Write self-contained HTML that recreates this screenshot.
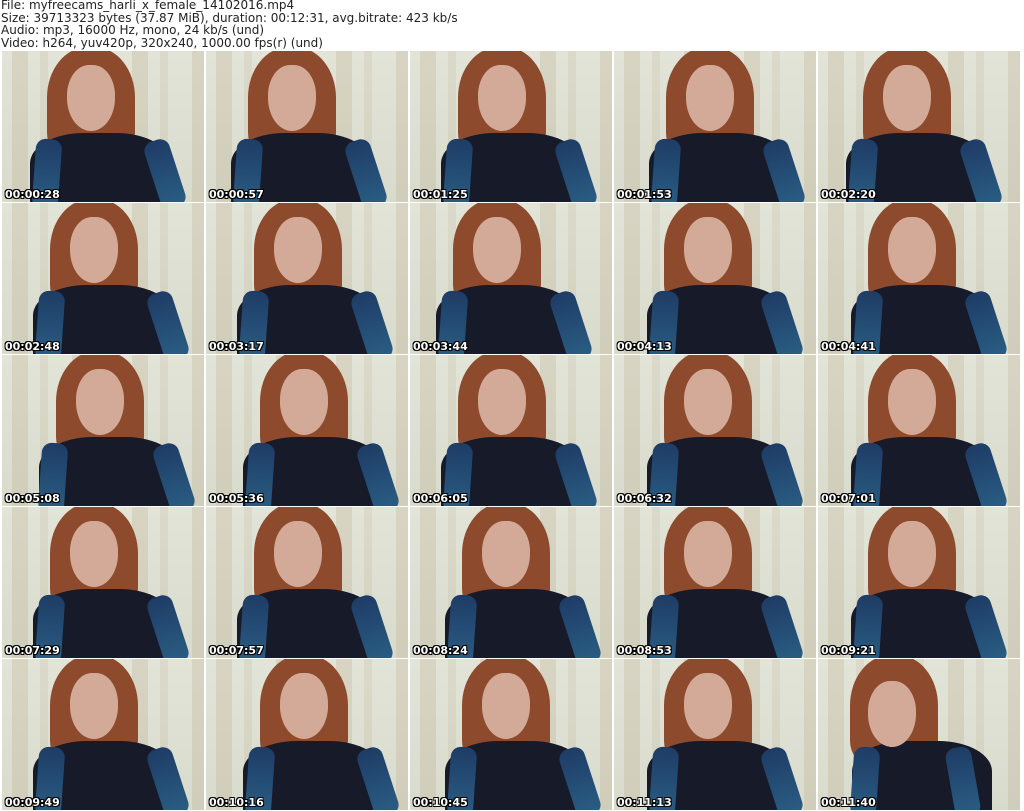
<!DOCTYPE html><html><head><style>
body{margin:0;width:1024px;height:811px;background:#fff;position:relative;overflow:hidden;font-family:"DejaVu Sans","Liberation Sans",sans-serif}
.hd{position:absolute;left:1px;top:-1px;font-size:12px;line-height:12.6px;color:#222;white-space:pre}
.c{position:absolute;width:202px;height:151px;overflow:hidden;background:#dde0d2;
background-image:repeating-linear-gradient(90deg,rgba(170,140,100,0) 0 10px,rgba(170,140,100,.18) 10px 26px,rgba(170,140,100,0) 26px 38px,rgba(170,140,100,.12) 38px 46px,rgba(170,140,100,0) 46px 60px),linear-gradient(#e2e4d8,#d8dbcc)}
.c i{position:absolute;display:block}
.h{top:-4px;width:88px;height:110px;border-radius:46% 46% 22% 22%;background:#8e4a2c}
.f{top:14px;width:48px;height:66px;border-radius:46% 46% 50% 50%;background:#d3aa98}
.b{top:82px;width:140px;height:80px;border-radius:38% 38% 0 0;background:#171a28}
.a{top:88px;width:26px;height:70px;border-radius:10px;background:linear-gradient(#1e3c66,#2a5e84)}
.t{position:absolute;left:3px;bottom:1px;color:#fff;font-weight:bold;font-size:11px;text-shadow:-1px -1px 0 #000,1px -1px 0 #000,-1px 1px 0 #000,1px 1px 0 #000}
</style></head><body>
<div class="hd">File: myfreecams_harli_x_female_14102016.mp4
Size: 39713323 bytes (37.87 MiB), duration: 00:12:31, avg.bitrate: 423 kb/s
Audio: mp3, 16000 Hz, mono, 24 kb/s (und)
Video: h264, yuv420p, 320x240, 1000.00 fps(r) (und)</div>

<div class="c" style="left:2px;top:51px"><i class="h" style="left:45px"></i><i class="b" style="left:28px"></i><i class="a" style="left:32px;transform:rotate(4deg)"></i><i class="a" style="left:150px;transform:rotate(-18deg)"></i><i class="f" style="left:65px"></i><span class="t">00:00:28</span></div>
<div class="c" style="left:206px;top:51px"><i class="h" style="left:42px"></i><i class="b" style="left:25px"></i><i class="a" style="left:29px;transform:rotate(4deg)"></i><i class="a" style="left:147px;transform:rotate(-18deg)"></i><i class="f" style="left:62px"></i><span class="t">00:00:57</span></div>
<div class="c" style="left:410px;top:51px"><i class="h" style="left:48px"></i><i class="b" style="left:31px"></i><i class="a" style="left:35px;transform:rotate(4deg)"></i><i class="a" style="left:153px;transform:rotate(-18deg)"></i><i class="f" style="left:68px"></i><span class="t">00:01:25</span></div>
<div class="c" style="left:614px;top:51px"><i class="h" style="left:52px"></i><i class="b" style="left:35px"></i><i class="a" style="left:39px;transform:rotate(4deg)"></i><i class="a" style="left:157px;transform:rotate(-18deg)"></i><i class="f" style="left:72px"></i><span class="t">00:01:53</span></div>
<div class="c" style="left:818px;top:51px"><i class="h" style="left:45px"></i><i class="b" style="left:28px"></i><i class="a" style="left:32px;transform:rotate(4deg)"></i><i class="a" style="left:150px;transform:rotate(-18deg)"></i><i class="f" style="left:65px"></i><span class="t">00:02:20</span></div>

<div class="c" style="left:2px;top:203px"><i class="h" style="left:48px"></i><i class="b" style="left:31px"></i><i class="a" style="left:35px;transform:rotate(4deg)"></i><i class="a" style="left:153px;transform:rotate(-18deg)"></i><i class="f" style="left:68px"></i><span class="t">00:02:48</span></div>
<div class="c" style="left:206px;top:203px"><i class="h" style="left:48px"></i><i class="b" style="left:31px"></i><i class="a" style="left:35px;transform:rotate(4deg)"></i><i class="a" style="left:153px;transform:rotate(-18deg)"></i><i class="f" style="left:68px"></i><span class="t">00:03:17</span></div>
<div class="c" style="left:410px;top:203px"><i class="h" style="left:43px"></i><i class="b" style="left:26px"></i><i class="a" style="left:30px;transform:rotate(4deg)"></i><i class="a" style="left:148px;transform:rotate(-18deg)"></i><i class="f" style="left:63px"></i><span class="t">00:03:44</span></div>
<div class="c" style="left:614px;top:203px"><i class="h" style="left:50px"></i><i class="b" style="left:33px"></i><i class="a" style="left:37px;transform:rotate(4deg)"></i><i class="a" style="left:155px;transform:rotate(-18deg)"></i><i class="f" style="left:70px"></i><span class="t">00:04:13</span></div>
<div class="c" style="left:818px;top:203px"><i class="h" style="left:50px"></i><i class="b" style="left:33px"></i><i class="a" style="left:37px;transform:rotate(4deg)"></i><i class="a" style="left:155px;transform:rotate(-18deg)"></i><i class="f" style="left:70px"></i><span class="t">00:04:41</span></div>

<div class="c" style="left:2px;top:355px"><i class="h" style="left:54px"></i><i class="b" style="left:37px"></i><i class="a" style="left:38px;transform:rotate(4deg)"></i><i class="a" style="left:159px;transform:rotate(-18deg)"></i><i class="f" style="left:74px"></i><span class="t">00:05:08</span></div>
<div class="c" style="left:206px;top:355px"><i class="h" style="left:54px"></i><i class="b" style="left:37px"></i><i class="a" style="left:41px;transform:rotate(4deg)"></i><i class="a" style="left:159px;transform:rotate(-18deg)"></i><i class="f" style="left:74px"></i><span class="t">00:05:36</span></div>
<div class="c" style="left:410px;top:355px"><i class="h" style="left:48px"></i><i class="b" style="left:31px"></i><i class="a" style="left:35px;transform:rotate(4deg)"></i><i class="a" style="left:153px;transform:rotate(-18deg)"></i><i class="f" style="left:68px"></i><span class="t">00:06:05</span></div>
<div class="c" style="left:614px;top:355px"><i class="h" style="left:50px"></i><i class="b" style="left:33px"></i><i class="a" style="left:37px;transform:rotate(4deg)"></i><i class="a" style="left:155px;transform:rotate(-18deg)"></i><i class="f" style="left:70px"></i><span class="t">00:06:32</span></div>
<div class="c" style="left:818px;top:355px"><i class="h" style="left:50px"></i><i class="b" style="left:33px"></i><i class="a" style="left:37px;transform:rotate(4deg)"></i><i class="a" style="left:155px;transform:rotate(-18deg)"></i><i class="f" style="left:70px"></i><span class="t">00:07:01</span></div>

<div class="c" style="left:2px;top:507px"><i class="h" style="left:48px"></i><i class="b" style="left:31px"></i><i class="a" style="left:35px;transform:rotate(4deg)"></i><i class="a" style="left:153px;transform:rotate(-18deg)"></i><i class="f" style="left:68px"></i><span class="t">00:07:29</span></div>
<div class="c" style="left:206px;top:507px"><i class="h" style="left:48px"></i><i class="b" style="left:31px"></i><i class="a" style="left:35px;transform:rotate(4deg)"></i><i class="a" style="left:153px;transform:rotate(-18deg)"></i><i class="f" style="left:68px"></i><span class="t">00:07:57</span></div>
<div class="c" style="left:410px;top:507px"><i class="h" style="left:52px"></i><i class="b" style="left:35px"></i><i class="a" style="left:39px;transform:rotate(4deg)"></i><i class="a" style="left:157px;transform:rotate(-18deg)"></i><i class="f" style="left:72px"></i><span class="t">00:08:24</span></div>
<div class="c" style="left:614px;top:507px"><i class="h" style="left:50px"></i><i class="b" style="left:33px"></i><i class="a" style="left:37px;transform:rotate(4deg)"></i><i class="a" style="left:155px;transform:rotate(-18deg)"></i><i class="f" style="left:70px"></i><span class="t">00:08:53</span></div>
<div class="c" style="left:818px;top:507px"><i class="h" style="left:50px"></i><i class="b" style="left:33px"></i><i class="a" style="left:37px;transform:rotate(4deg)"></i><i class="a" style="left:155px;transform:rotate(-18deg)"></i><i class="f" style="left:70px"></i><span class="t">00:09:21</span></div>

<div class="c" style="left:2px;top:659px"><i class="h" style="left:48px"></i><i class="b" style="left:31px"></i><i class="a" style="left:35px;transform:rotate(4deg)"></i><i class="a" style="left:153px;transform:rotate(-18deg)"></i><i class="f" style="left:68px"></i><span class="t">00:09:49</span></div>
<div class="c" style="left:206px;top:659px"><i class="h" style="left:54px"></i><i class="b" style="left:37px"></i><i class="a" style="left:41px;transform:rotate(4deg)"></i><i class="a" style="left:159px;transform:rotate(-18deg)"></i><i class="f" style="left:74px"></i><span class="t">00:10:16</span></div>
<div class="c" style="left:410px;top:659px"><i class="h" style="left:52px"></i><i class="b" style="left:35px"></i><i class="a" style="left:39px;transform:rotate(4deg)"></i><i class="a" style="left:157px;transform:rotate(-18deg)"></i><i class="f" style="left:72px"></i><span class="t">00:10:45</span></div>
<div class="c" style="left:614px;top:659px"><i class="h" style="left:50px"></i><i class="b" style="left:33px"></i><i class="a" style="left:37px;transform:rotate(4deg)"></i><i class="a" style="left:155px;transform:rotate(-18deg)"></i><i class="f" style="left:70px"></i><span class="t">00:11:13</span></div>
<div class="c" style="left:818px;top:659px"><i class="h" style="left:32px"></i><i class="b" style="left:34px"></i><i class="a" style="left:34px;transform:rotate(4deg)"></i><i class="a" style="left:132px;transform:rotate(-10deg)"></i><i class="f" style="left:50px;top:22px"></i><span class="t">00:11:40</span></div>
</body></html>
